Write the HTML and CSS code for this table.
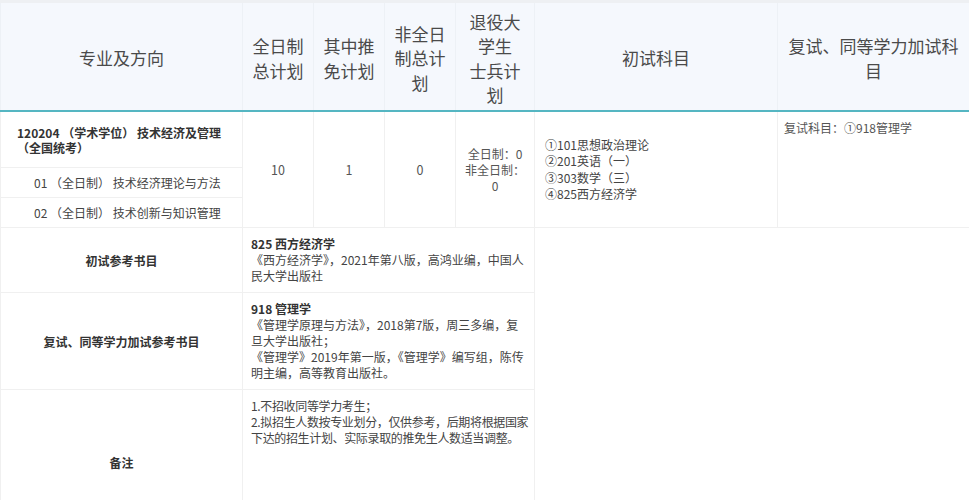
FILE: index.html
```html
<!DOCTYPE html>
<html lang="zh">
<head>
<meta charset="utf-8">
<title>招生计划</title>
<link rel="stylesheet" href="styles.css">
</head>
<body>
<div class="strip"></div>
<table class="plan">
  <colgroup>
    <col class="c1"><col class="c2"><col class="c3"><col class="c4"><col class="c5"><col class="c6"><col class="c7">
  </colgroup>
  <thead>
    <tr>
      <th>专业及方向</th>
      <th>全日制总计划</th>
      <th>其中推免计划</th>
      <th>非全日制总计划</th>
      <th>退役大学生<br>士兵计划</th>
      <th>初试科目</th>
      <th>复试、同等学力加试科目</th>
    </tr>
  </thead>
  <tbody>
    <tr class="r-title">
      <td class="major">120204 （学术学位） 技术经济及管理（全国统考）</td>
      <td class="num" rowspan="3">10</td>
      <td class="num" rowspan="3">1</td>
      <td class="num" rowspan="3">0</td>
      <td class="num lines" rowspan="3">全日制：0<br>非全日制：<br>0</td>
      <td class="subjects" rowspan="3">①101思想政治理论<br>②201英语（一）<br>③303数学（三）<br>④825西方经济学</td>
      <td class="retest" rowspan="3">复试科目：①918管理学</td>
    </tr>
    <tr class="r-sub">
      <td class="dir">01 （全日制） 技术经济理论与方法</td>
    </tr>
    <tr class="r-sub">
      <td class="dir">02 （全日制） 技术创新与知识管理</td>
    </tr>
    <tr>
      <td class="label">初试参考书目</td>
      <td class="info" colspan="4"><b>825 西方经济学</b><br>《西方经济学》，2021年第八版，高鸿业编，中国人民大学出版社</td>
      <td class="empty" colspan="2" rowspan="3"></td>
    </tr>
    <tr>
      <td class="label">复试、同等学力加试参考书目</td>
      <td class="info" colspan="4"><b>918 管理学</b><br>《管理学原理与方法》，2018第7版，周三多编，复旦大学出版社；<br>《管理学》2019年第一版，《管理学》编写组，陈传明主编，高等教育出版社。</td>
    </tr>
    <tr class="r-note">
      <td class="label">备注</td>
      <td class="info note" colspan="4">1.不招收同等学力考生；<br>2.拟招生人数按专业划分，仅供参考，后期将根据国家下达的招生计划、实际录取的推免生人数适当调整。</td>
    </tr>
  </tbody>
</table>
</body>
</html>
```

FILE: styles.css
```css
html, body {
  margin: 0;
  padding: 0;
  background: #ffffff;
}
body {
  font-family: "Noto Sans CJK SC", "Noto Sans", sans-serif;
  color: #333333;
  font-size: 12px;
}
.strip {
  height: 3px;
  background: #eef0f3;
}
.plan {
  width: 969px;
  table-layout: fixed;
  border-collapse: collapse;
}
.c1 { width: 242px; }
.c2 { width: 71px; }
.c3 { width: 71px; }
.c4 { width: 71px; }
.c5 { width: 79px; }
.c6 { width: 243px; }
.c7 { width: 192px; }

.plan th {
  background: #f5f8fd;
  color: #4a4a4a;
  font-weight: normal;
  font-size: 17px;
  line-height: 24.5px;
  height: 108px;
  box-sizing: border-box;
  padding: 4px 8px 0;
  text-align: center;
  vertical-align: middle;
  border-left: 1px solid #edf1f6;
  border-right: 1px solid #edf1f6;
  border-bottom: 2px solid #55b6c2;
}
.plan td {
  border: 1px solid #f0f0f0;
  padding: 0;
  vertical-align: middle;
}
.r-title .major {
  height: 55px;
  font-weight: bold;
  line-height: 15px;
  padding: 0 16px;
  color: #333;
}
.r-sub .dir {
  height: 29px;
  padding-left: 33px;
  color: #444;
  line-height: 16px;
}
.num {
  text-align: center;
  color: #555;
  font-size: 12.5px;
}
.plan td.lines {
  line-height: 16px;
  padding: 0 4px;
  font-size: 12px;
}
.plan td.subjects {
  line-height: 16.3px;
  padding: 0 8px 0 10px;
  color: #444;
}
.plan td.retest {
  vertical-align: top;
  padding: 8px 6px;
  color: #555;
  line-height: 16px;
}
.label {
  text-align: center;
  font-weight: bold;
  color: #333;
}
.plan td.info {
  vertical-align: top;
  padding: 8px 4px 8px 8px;
  line-height: 16px;
  color: #444;
}
.plan td.note {
  height: 128px;
  padding-right: 1px;
  letter-spacing: -0.35px;
}
.info b {
  color: #333;
}
.plan td.empty {
  border-right: none;
  border-bottom: none;
}
```
